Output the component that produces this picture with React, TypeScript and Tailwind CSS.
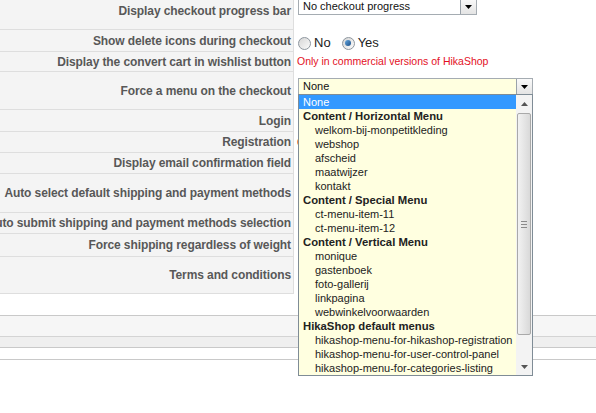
import React from "react";

type Row = {
  label: string;
  rowClass: string;
  value?: "progress" | "radio" | "commercial" | "menu";
};

const rows: Row[] = [
  { label: "Display checkout progress bar", rowClass: "h-[38px]", value: "progress" },
  { label: "Show delete icons during checkout", rowClass: "h-[22px]", value: "radio" },
  { label: "Display the convert cart in wishlist button", rowClass: "h-[20px]", value: "commercial" },
  { label: "Force a menu on the checkout", rowClass: "h-[38px]", value: "menu" },
  { label: "Login", rowClass: "h-[22px]" },
  { label: "Registration", rowClass: "h-[21px]", value: "commercial" },
  { label: "Display email confirmation field", rowClass: "h-[21px]" },
  { label: "Auto select default shipping and payment methods", rowClass: "h-[39px]" },
  { label: "Auto submit shipping and payment methods selection", rowClass: "h-[21px]" },
  { label: "Force shipping regardless of weight", rowClass: "h-[23px]" },
  { label: "Terms and conditions", rowClass: "h-[37px]" },
];

type MenuItem = { text: string; group?: boolean; selected?: boolean };

const menuItems: MenuItem[] = [
  { text: "None", selected: true },
  { text: "Content / Horizontal Menu", group: true },
  { text: "welkom-bij-monpetitkleding" },
  { text: "webshop" },
  { text: "afscheid" },
  { text: "maatwijzer" },
  { text: "kontakt" },
  { text: "Content / Special Menu", group: true },
  { text: "ct-menu-item-11" },
  { text: "ct-menu-item-12" },
  { text: "Content / Vertical Menu", group: true },
  { text: "monique" },
  { text: "gastenboek" },
  { text: "foto-gallerij" },
  { text: "linkpagina" },
  { text: "webwinkelvoorwaarden" },
  { text: "HikaShop default menus", group: true },
  { text: "hikashop-menu-for-hikashop-registration" },
  { text: "hikashop-menu-for-user-control-panel" },
  { text: "hikashop-menu-for-categories-listing" },
];

function DownTriangle({ color = "#000" }: { color?: string }) {
  return (
    <svg width="7" height="4" viewBox="0 0 7 4">
      <path d="M0 0h7L3.5 4z" fill={color} />
    </svg>
  );
}

function UpTriangle({ color = "#555" }: { color?: string }) {
  return (
    <svg width="7" height="4" viewBox="0 0 7 4">
      <path d="M0 4h7L3.5 0z" fill={color} />
    </svg>
  );
}

function SelectButton() {
  return (
    <span className="flex h-full w-[16px] items-center justify-center border-l border-[#9aa2aa] bg-gradient-to-b from-[#fafafa] to-[#e4e4e4]">
      <DownTriangle />
    </span>
  );
}

function Radio({ checked }: { checked?: boolean }) {
  return (
    <span className="inline-flex h-[13px] w-[13px] items-center justify-center rounded-full border border-[#8d969e] bg-gradient-to-br from-[#d6d6d6] to-[#fbfbfb]">
      {checked && (
        <span className="h-[6px] w-[6px] rounded-full bg-gradient-to-br from-[#63a7e0] to-[#1d4f86]" />
      )}
    </span>
  );
}

function Commercial() {
  return (
    <span className="whitespace-nowrap text-[10.5px] text-[#e3101e]">
      Only in commercial versions of HikaShop
    </span>
  );
}

function MenuList() {
  return (
    <div className="absolute left-0 top-[16px] z-10 flex h-[282px] w-[235px] border border-[#7f8c96] bg-[#ffffe0]">
      <ul className="flex w-[217px] flex-col">
        {menuItems.map((item) => (
          <li
            key={item.text}
            className={
              item.selected
                ? "flex h-[14px] items-center whitespace-nowrap bg-[#3399ff] pl-[4px] text-[11px] text-white"
                : item.group
                ? "flex h-[14px] items-center whitespace-nowrap pl-[4px] text-[11.3px] font-bold text-[#222]"
                : "flex h-[14px] items-center whitespace-nowrap pl-[16px] text-[11px] text-[#222]"
            }
          >
            {item.text}
          </li>
        ))}
      </ul>
      {/* vertical scrollbar */}
      <div className="flex w-[16px] flex-col bg-[#f3f3f3]">
        <div className="flex h-[18px] items-center justify-center">
          <UpTriangle />
        </div>
        <div className="mx-[1px] flex h-[222px] flex-col items-center justify-center gap-[2px] rounded-[2px] border border-[#a9a9a9] bg-gradient-to-r from-[#f2f2f2] to-[#d9d9d9]">
          <span className="h-px w-[6px] bg-[#8a8a8a]" />
          <span className="h-px w-[6px] bg-[#8a8a8a]" />
          <span className="h-px w-[6px] bg-[#8a8a8a]" />
        </div>
        <div className="flex-1" />
        <div className="flex h-[17px] items-center justify-center">
          <DownTriangle color="#555" />
        </div>
      </div>
    </div>
  );
}

function Value({ kind }: { kind?: Row["value"] }) {
  if (kind === "progress") {
    return (
      <div className="ml-[1px] flex h-[17px] w-[179px] items-stretch border border-[#a5acb2] bg-white">
        <span className="flex flex-1 items-center pl-[4px] text-[11px] text-[#111]">No checkout progress</span>
        <SelectButton />
      </div>
    );
  }
  if (kind === "radio") {
    return (
      <div className="ml-[1px] flex items-center pt-[4px] text-[13px] text-[#222]">
        <Radio />
        <span className="ml-[3px]">No</span>
        <span className="ml-[11px] flex">
          <Radio checked />
        </span>
        <span className="ml-[3px]">Yes</span>
      </div>
    );
  }
  if (kind === "commercial") {
    return <Commercial />;
  }
  if (kind === "menu") {
    return (
      <div className="relative ml-[1px]">
        <div className="flex h-[17px] w-[235px] items-stretch border border-[#a5acb2] bg-[#ffffe0]">
          <span className="flex flex-1 items-center pl-[4px] text-[11px] text-[#111]">None</span>
          <SelectButton />
        </div>
        <MenuList />
      </div>
    );
  }
  return null;
}

export default function App() {
  return (
    <div
      className="h-[413px] w-[596px] overflow-hidden bg-white"
      style={{ fontFamily: '"Liberation Sans", Arial, sans-serif' }}
    >
      <div className="-mt-[8px] flex flex-col">
        {rows.map((row) => {
          const topAligned = row.value === "progress" || row.value === "menu";
          return (
            <div key={row.label} className={`flex ${row.rowClass}`}>
              <div className="flex w-[294px] shrink-0 items-center justify-end overflow-hidden whitespace-nowrap border-b border-r border-[#dedede] bg-[#f4f4f4] pr-[2px] text-[12px] font-bold tracking-[-0.1px] text-[#585858]">
                {row.label}
              </div>
              <div
                className={
                  topAligned
                    ? "flex flex-1 items-start pl-[3px] pt-[6px]"
                    : "flex flex-1 items-center pl-[3px]"
                }
              >
                <Value kind={row.value} />
              </div>
            </div>
          );
        })}
        {/* footer bars below the form */}
        <div className="mt-[21px] flex flex-col">
          <div className="h-[21px] border-t border-[#c9c9c9] bg-[#f6f6f6]" />
          <div className="h-[11px] border-t border-[#d4d4d4] bg-[#efefef]" />
          <div className="h-[12px] border-t border-[#c9c9c9] bg-white" />
          <div className="border-t border-[#c9c9c9]" />
        </div>
      </div>
    </div>
  );
}
